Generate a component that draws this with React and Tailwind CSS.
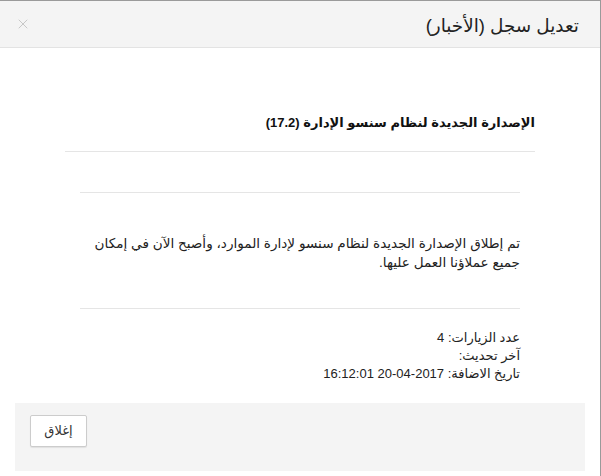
import React from "react";
import { X } from "lucide-react";

const App = () => {
  return (
    <div
      dir="rtl"
      className="w-[601px] h-[476px] bg-white border-t border-r border-[#9a9a9a] font-['Liberation_Sans','DejaVu_Sans',sans-serif] text-[#222] overflow-hidden"
    >
      <div className="h-[47px] bg-[#f4f4f4] border-b border-[#e3e3e3] flex items-center justify-between pr-[21px] pl-[15px]">
        <h2 className="text-[18.4px] leading-[24px] pt-[3px] text-[#222]">تعديل سجل (الأخبار)</h2>
        <button className="text-[#c4c4c4]">
          <X size={16} strokeWidth={1.4} />
        </button>
      </div>

      <div className="pt-[66px] px-[65px]">
        <h3 className="text-[13px] font-bold leading-[18px] text-[#111]">
          الإصدارة الجديدة لنظام سنسو الإدارة (17.2)
        </h3>
        <div className="mt-[19px] border-t border-[#e5e5e5]" />

        <div className="px-[15px]">
          <div className="mt-[40px] border-t border-[#e5e5e5]" />
          <p className="mt-[41px] text-[13.6px] leading-[19px]">
            تم إطلاق الإصدارة الجديدة لنظام سنسو لإدارة الموارد، وأصبح الآن في إمكان جميع عملاؤنا العمل عليها.
          </p>
          <div className="mt-[36px] border-t border-[#e5e5e5]" />
          <div className="mt-[20px] text-[13px] leading-[18px]">
            <p>عدد الزيارات: 4</p>
            <p>آخر تحديث:</p>
            <p>تاريخ الاضافة: 2017-04-20 16:12:01</p>
          </div>
        </div>
      </div>

      <div className="mt-[20px] mx-[15px] h-[68px] bg-[#f4f4f4] flex items-start justify-end pl-[15px] pt-[12px]">
        <button className="h-[32px] w-[57px] bg-white border border-[#cccccc] rounded-[2px] shadow-[0_1px_1px_rgba(0,0,0,0.08)] text-[13px] text-[#333]">
          إغلاق
        </button>
      </div>
    </div>
  );
};

export default App;
